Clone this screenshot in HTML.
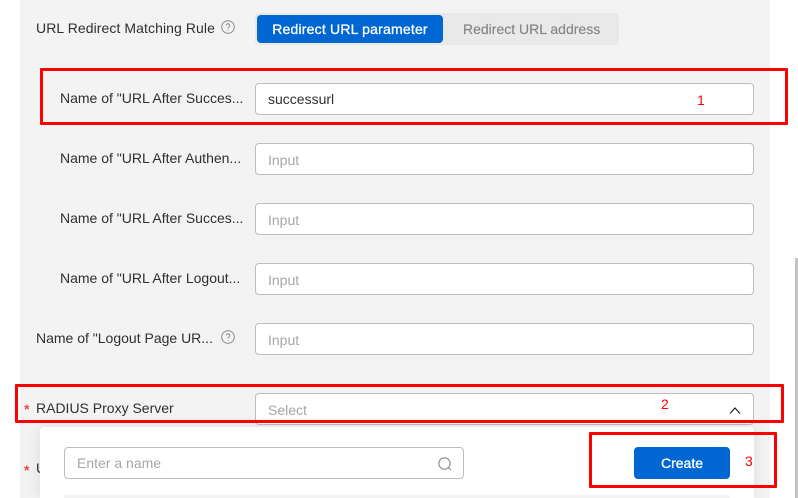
<!DOCTYPE html>
<html><head><meta charset="utf-8"><style>
html,body{margin:0;padding:0;width:798px;height:498px;overflow:hidden}
body{position:relative;background:#fff;font-family:"Liberation Sans",sans-serif;font-size:14px;color:#2f2f2f}
div,span{position:absolute;box-sizing:border-box;white-space:nowrap}
#wrap{left:0;top:0;width:798px;height:498px;overflow:hidden;background:#fff}
.panel{left:20px;top:0;width:750px;height:498px;background:#f3f3f3}
.lb{line-height:20px;height:20px}
.in{left:255px;width:499px;height:32px;background:#fff;border:1px solid #bdbdbd;border-radius:4px;padding-left:12px;line-height:31px;color:#a6a6a6}
.ph{line-height:33px}
.red{border:3px solid #f00;border-radius:1px}
.num{color:#f00;font-family:"Liberation Sans",sans-serif;font-size:14px;line-height:16px}
.star{color:#e84a4a;font-size:14px;font-weight:bold;line-height:14px;left:24px}
svg{position:absolute}
</style></head><body>
<div id="wrap">
<div class="panel"></div>
<div class="lb" style="left:36px;top:18px;width:180px;letter-spacing:.08px">URL Redirect Matching Rule</div>
<svg style="left:221px;top:20px" width="14" height="14" viewBox="0 0 14 14" fill="none" stroke="#8a8a8a"><circle cx="7" cy="7" r="6.3"/><path d="M5.2 5.5a1.8 1.8 0 1 1 2.8 1.5c-.7.4-1 .8-1 1.5"/><path d="M7 10v.8"/></svg>
<div style="left:255px;top:13px;width:364px;height:32px;background:#e9e9e9;border-radius:4px"></div>
<div style="left:257px;top:15px;width:186px;height:28px;background:#0066d1;border-radius:4px;color:#fff;-webkit-text-stroke:.3px #fff;letter-spacing:.2px;text-align:center;line-height:29px;font-size:14px">Redirect URL parameter</div>
<div style="left:463px;top:15px;height:28px;line-height:29px;color:#858585;-webkit-text-stroke:.15px #858585">Redirect URL address</div>

<div class="lb" style="left:60px;top:88px">Name of "URL After Succes...</div>
<div class="in" style="top:83px;color:#2f2f2f">successurl</div>
<div class="lb" style="left:60px;top:148px">Name of "URL After Authen...</div>
<div class="in ph" style="top:143px">Input</div>
<div class="lb" style="left:60px;top:208px">Name of "URL After Succes...</div>
<div class="in ph" style="top:203px">Input</div>
<div class="lb" style="left:60px;top:268px">Name of "URL After Logout...</div>
<div class="in ph" style="top:263px">Input</div>
<div class="lb" style="left:36px;top:328px">Name of "Logout Page UR...</div>
<svg style="left:221px;top:330px" width="14" height="14" viewBox="0 0 14 14" fill="none" stroke="#8a8a8a"><circle cx="7" cy="7" r="6.3"/><path d="M5.2 5.5a1.8 1.8 0 1 1 2.8 1.5c-.7.4-1 .8-1 1.5"/><path d="M7 10v.8"/></svg>
<div class="in ph" style="top:323px">Input</div>

<div class="star" style="top:402px">*</div>
<div class="lb" style="left:36px;top:398px">RADIUS Proxy Server</div>
<div class="in ph" style="top:393px;height:32px">Select</div>
<svg style="left:728px;top:404px" width="14" height="12" viewBox="0 0 14 12" fill="none" stroke="#222" stroke-width="1.2"><path d="M2 9.5 7 4l5 5.5"/></svg>
<div class="star" style="top:463px">*</div>
<div class="lb" style="left:36px;top:458px">U</div>

<div style="left:40px;top:427px;width:714px;height:71px;background:#fff;border-radius:4px 4px 0 0;box-shadow:0 0 14px rgba(0,0,0,.1)"></div>
<div class="in" style="left:64px;top:447px;width:400px;padding-left:12px">Enter a name</div>
<svg style="left:437px;top:456px" width="16" height="16" viewBox="0 0 16 16" fill="none" stroke="#8a8a8a" stroke-width="1.1"><circle cx="7.5" cy="7.5" r="5.7"/><path d="M11.6 11.8l2.4 2.2"/></svg>
<div style="left:634px;top:447px;width:96px;height:32px;background:#0066d1;border-radius:4px;color:#fff;-webkit-text-stroke:.3px #fff;text-align:center;line-height:33px">Create</div>
<div style="left:64px;top:495px;width:666px;height:3px;background:#f3f3f3"></div>

<div class="red" style="left:40px;top:68px;width:748px;height:57px"></div>
<div class="red" style="left:15px;top:384px;width:769px;height:39px"></div>
<div class="red" style="left:589px;top:432px;width:188px;height:56px"></div>
<div class="num" style="left:697px;top:92px">1</div>
<div class="num" style="left:661px;top:396px">2</div>
<div class="num" style="left:745px;top:453px">3</div>
<div style="left:795px;top:258px;width:3px;height:240px;background:#c4c4c4"></div>
</div>
</body></html>
